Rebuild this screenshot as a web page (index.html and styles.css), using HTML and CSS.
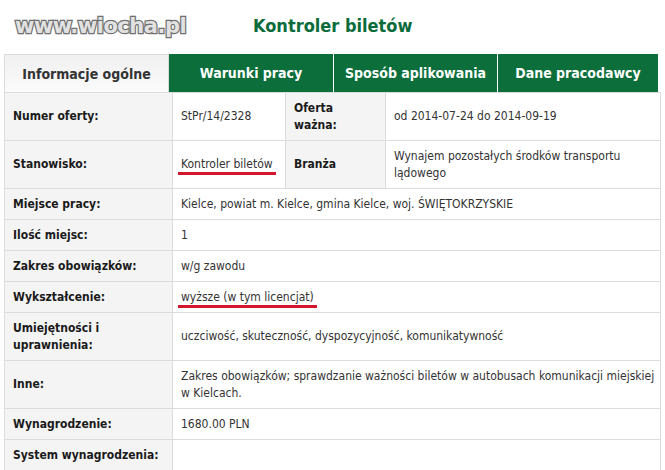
FILE: index.html
```html
<!DOCTYPE html>
<html lang="pl">
<head>
    <meta charset="UTF-8">
    <title>Kontroler biletów</title>
    <link rel="stylesheet" href="styles.css">
</head>
<body>
    <div class="page">
        <div class="header">
            <div class="logo">www.wiocha.pl</div>
            <h1 class="offer-title">Kontroler biletów</h1>
        </div>

        <div class="tabs">
            <div class="tab active">Informacje ogólne</div>
            <div class="tab">Warunki pracy</div>
            <div class="tab">Sposób aplikowania</div>
            <div class="tab">Dane pracodawcy</div>
        </div>

        <table class="offer">
            <colgroup>
                <col class="c-label">
                <col class="c-value">
                <col class="c-label2">
                <col>
            </colgroup>
            <tr class="tall">
                <th>Numer oferty:</th>
                <td>StPr/14/2328</td>
                <th>Oferta<br>ważna:</th>
                <td>od 2014-07-24 do 2014-09-19</td>
            </tr>
            <tr class="tall">
                <th>Stanowisko:</th>
                <td><span class="marked">Kontroler biletów</span></td>
                <th>Branża</th>
                <td>Wynajem pozostałych środków transportu lądowego</td>
            </tr>
            <tr>
                <th>Miejsce pracy:</th>
                <td colspan="3">Kielce, powiat m. Kielce, gmina Kielce, woj. ŚWIĘTOKRZYSKIE</td>
            </tr>
            <tr>
                <th>Ilość miejsc:</th>
                <td colspan="3">1</td>
            </tr>
            <tr>
                <th>Zakres obowiązków:</th>
                <td colspan="3">w/g zawodu</td>
            </tr>
            <tr>
                <th>Wykształcenie:</th>
                <td colspan="3"><span class="marked">wyższe (w tym licencjat)</span></td>
            </tr>
            <tr class="tall">
                <th>Umiejętności i<br>uprawnienia:</th>
                <td colspan="3">uczciwość, skuteczność, dyspozycyjność, komunikatywność</td>
            </tr>
            <tr class="tall">
                <th>Inne:</th>
                <td colspan="3">Zakres obowiązków; sprawdzanie ważności biletów w autobusach komunikacji miejskiej w Kielcach.</td>
            </tr>
            <tr>
                <th>Wynagrodzenie:</th>
                <td colspan="3">1680.00 PLN</td>
            </tr>
            <tr>
                <th>System wynagrodzenia:</th>
                <td colspan="3"></td>
            </tr>
        </table>
    </div>
</body>
</html>
```

FILE: styles.css
```css
body {
    margin: 0;
    background: #fff;
    font-family: "DejaVu Sans Condensed", "DejaVu Sans", sans-serif;
    font-size: 12px;
    color: #222;
}

.page {
    padding: 0 4px;
}

/* logo + offer name */
.header {
    display: flex;
    align-items: center;
    height: 54px;
}

.logo {
    width: 249px;
    padding-left: 11px;
    box-sizing: border-box;
    font-family: "DejaVu Sans", sans-serif;
    font-weight: bold;
    font-size: 21px;
    letter-spacing: -0.5px;
    color: #e2e2e2;
    -webkit-text-stroke: 2.5px #707070;
    paint-order: stroke fill;
    margin-top: -3px;
}

.offer-title {
    margin: 0;
    font-size: 18px;
    font-weight: bold;
    color: #0b6b3a;
    margin-top: -4px;
}

/* tabs */
.tabs {
    display: grid;
    grid-template-columns: 165px 164px 164px 1fr;
    margin-right: 3px;
    height: 38px;
}

.tab {
    display: flex;
    align-items: center;
    justify-content: center;
    background: #0b6e3b;
    color: #fff;
    font-weight: bold;
    font-size: 14px;
    border-left: 1px solid #fff;
}

.tab.active {
    background: linear-gradient(#f0f0f0, #fbfbfb);
    color: #333;
    border: 1px solid #dcdcdc;
    border-bottom: none;
}

.tab.active + .tab {
    border-left: none;
}

/* offer details */
.offer {
    width: 100%;
    border-collapse: collapse;
    table-layout: fixed;
}

.c-label {
    width: 168px;
}

.c-value {
    width: 113px;
}

.c-label2 {
    width: 100px;
}

.offer th,
.offer td {
    border: 1px solid #dcdcdc;
    height: 30px;
    padding: 0 8px;
    line-height: 17px;
    text-align: left;
    vertical-align: middle;
}

.offer td {
    padding: 0 2px 0 8px;
    color: #333;
}

.offer tr.tall th,
.offer tr.tall td {
    height: 47px;
}

.offer th {
    background: #f4f4f4;
    font-weight: bold;
    color: #1a1a1a;
}

.marked {
    border-bottom: 3px solid #d3162c;
    padding: 0 3px 1px 3px;
    margin-left: -3px;
}
```
